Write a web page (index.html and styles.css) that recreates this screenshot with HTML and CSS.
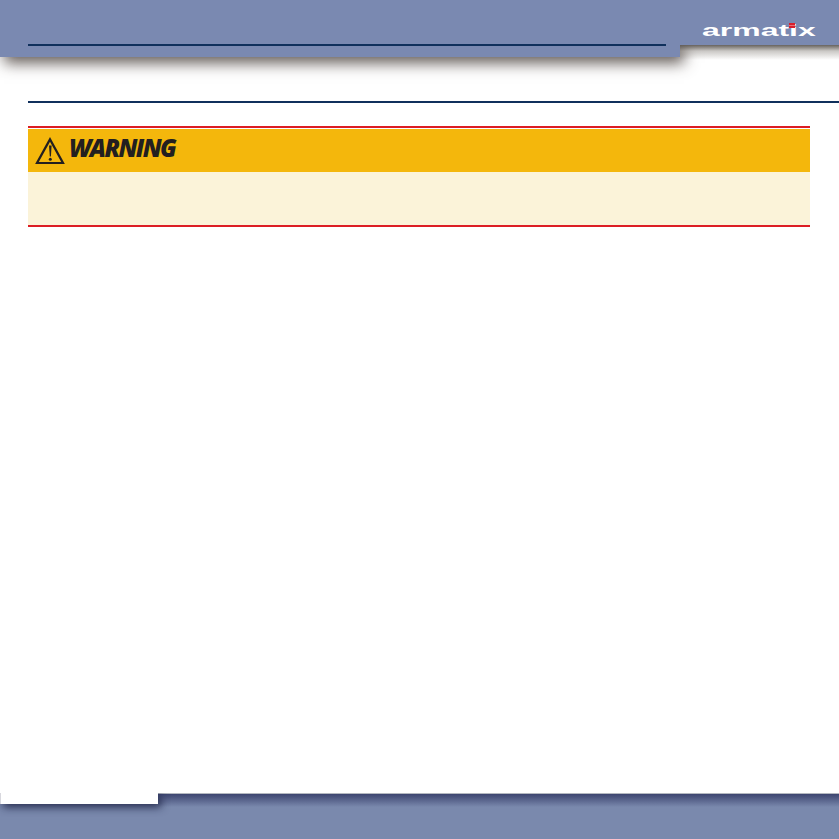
FILE: index.html
```html
<!DOCTYPE html>
<html lang="en">
<head>
<meta charset="utf-8">
<title>Warning</title>
<link rel="stylesheet" href="styles.css">
</head>
<body>
<div class="page">
  <header class="top">
    <div class="top-main"><div class="top-rule"></div></div>
    <div class="top-side">
      <div class="logo"><span class="logo-text">armatix</span><span class="logo-dot"></span></div>
    </div>
  </header>
  <main class="content">
    <div class="content-rule"></div>
    <section class="warning">
      <div class="warning-head">
        <svg class="warning-icon" width="30" height="28" viewBox="0 0 30 28" aria-hidden="true">
          <path d="M15 2.4 L28 26 H2 Z" fill="none" stroke="#231f20" stroke-width="2.2" stroke-linejoin="miter"/>
          <path d="M14 8.5 H16.6 L15.9 19.5 H14.8 Z" fill="#231f20"/>
          <circle cx="15.3" cy="22.3" r="1.5" fill="#231f20"/>
        </svg>
        <span class="warning-title">WARNING</span>
      </div>
      <div class="warning-body"></div>
    </section>
  </main>
  <footer class="bottom">
    <div class="bottom-tab"></div>
    <div class="bottom-side"></div>
  </footer>
</div>
</body>
</html>
```
FILE: styles.css
```css
* { box-sizing: border-box; }
html, body { margin: 0; padding: 0; background: #fff; }
.page {
  width: 839px;
  height: 839px;
  display: flex;
  flex-direction: column;
  overflow: hidden;
}
.top {
  display: flex;
  align-items: flex-start;
  height: 57px;
  flex: none;
}
.top-main {
  width: 680px;
  height: 57px;
  background: #7a89b1;
  padding: 44px 14px 0 28px;
  box-shadow: 4px 6px 14px rgba(60, 50, 45, .8);
  position: relative;
  z-index: 1;
}
.top-rule { height: 2px; background: #10305c; }
.top-side {
  width: 159px;
  height: 45px;
  background: #7a89b1;
  padding: 23px 0 0 23px;
  position: relative;
  z-index: 2;
}
.top-side::after {
  content: "";
  position: absolute;
  left: 0;
  right: 0;
  top: 45px;
  height: 15px;
  background: linear-gradient(rgba(95, 90, 85, .95), rgba(150, 145, 140, .5) 40%, rgba(255, 255, 255, 0));
}
.logo { position: relative; width: 113px; height: 16px; }
.logo-text {
  display: block;
  font: bold 17px/16px "Liberation Sans", Arial, sans-serif;
  color: #fff;
  transform-origin: 0 50%;
  transform: scaleX(1.88);
  white-space: nowrap;
  margin-left: -1px;
}
.logo-dot {
  position: absolute;
  left: 86px;
  top: 0;
  width: 6px;
  height: 5px;
  background: linear-gradient(#d8202c 40%, #e8707a 40%, #e8707a 60%, #d8202c 60%);
}
.content {
  flex: 1;
  padding: 44px 0 0 28px;
}
.content-rule { height: 2px; background: #10305c; }
.warning {
  width: 782px;
  margin-top: 23px;
  border-top: 2px solid #dc1d24;
  border-bottom: 2px solid #dc1d24;
  padding-top: 1px;
}
.warning-head {
  height: 43px;
  background: #f4b70c;
  display: flex;
  align-items: center;
  gap: 5px;
  padding: 1px 0 0 7px;
}
.warning-icon { flex: none; }
.warning-title {
  font: italic 800 24px/1 "Open Sans", sans-serif;
  color: #231f20;
  letter-spacing: -1.6px;
  margin: -6px 0 0 -1px;
}
.warning-body { height: 53px; background: #fbf3d9; }
.bottom {
  position: relative;
  display: flex;
  align-items: flex-start;
  height: 46px;
  flex: none;
  background: #7a89ad;
  overflow: hidden;
}
.bottom-tab {
  width: 158px;
  height: 11px;
  background: #fff;
  border-left: 1px solid #d8d8de;
  box-shadow: 3px 3px 9px rgba(30, 35, 70, .95);
  position: relative;
  z-index: 2;
}
.bottom-side {
  flex: 1;
  height: 14px;
  border-top: 1px solid #b4b8c0;
  background: linear-gradient(#3d4570, rgba(122, 137, 173, 0));
}
```
